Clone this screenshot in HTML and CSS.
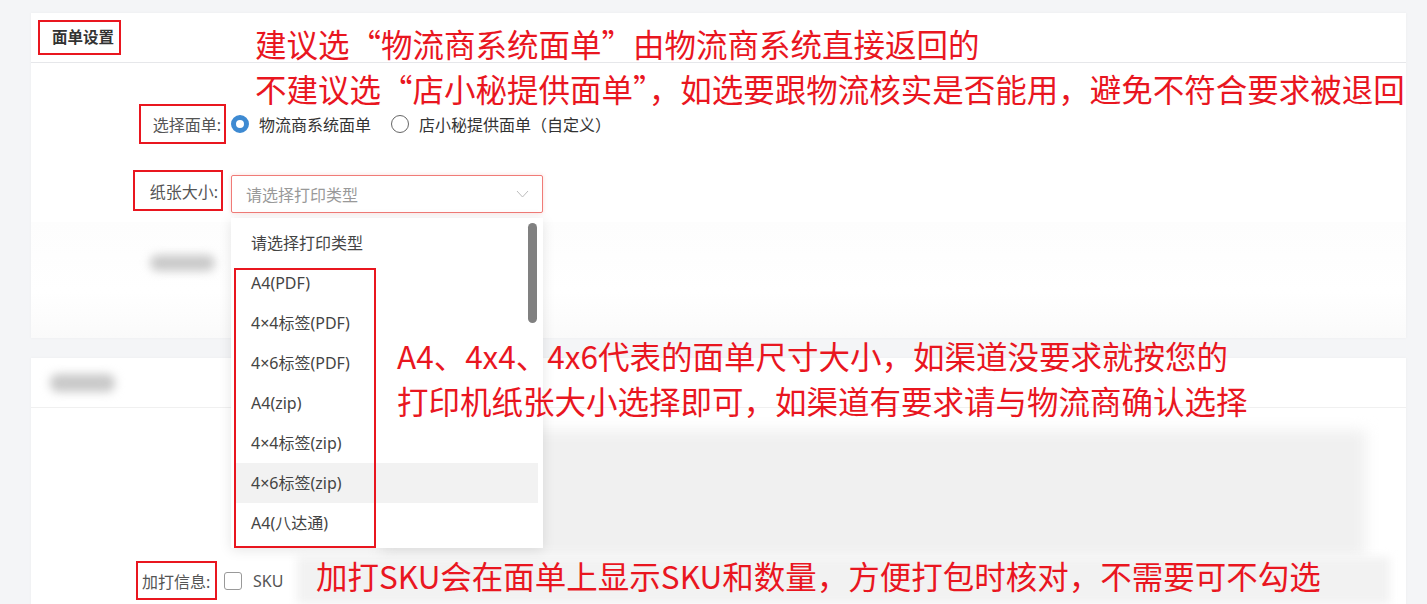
FILE: index.html
```html
<!DOCTYPE html>
<html lang="zh-CN">
<head>
  <meta charset="UTF-8" />
  <meta name="viewport" content="width=device-width, initial-scale=1.0"/>
  <title>面单设置</title>
  <link rel="stylesheet" href="styles.css">
</head>
<body>
  <div class="page">
    <section class="card card-top">
      <div class="card-head">
        <h2 class="mark title">面单设置</h2>
      </div>

      <div class="form">
        <div class="row">
          <div class="label-col"><span class="mark label">选择面单:</span></div>
          <label class="radio checked"><span class="dot"></span>物流商系统面单</label>
          <label class="radio"><span class="dot"></span>店小秘提供面单（自定义）</label>
        </div>

        <div class="row">
          <div class="label-col"><span class="mark label label-paper">纸张大小:</span></div>
          <div class="select">
            <div class="select-box">
              <span class="placeholder">请选择打印类型</span>
              <svg class="chevron" width="13" height="8" viewBox="0 0 13 8">
                <polyline points="1,1 6.5,7 12,1" fill="none" stroke="#bdbdbd" stroke-width="1"/>
              </svg>
            </div>
            <ul class="dropdown">
              <li>请选择打印类型</li>
              <li>A4(PDF)</li>
              <li>4×4标签(PDF)</li>
              <li>4×6标签(PDF)</li>
              <li>A4(zip)</li>
              <li>4×4标签(zip)</li>
              <li class="hover">4×6标签(zip)</li>
              <li>A4(八达通)</li>
            </ul>
            <span class="scroll-thumb"></span>
            <span class="items-mark"></span>
          </div>
        </div>
      </div>

      <div class="ghost-area">
        <span class="ghost ghost-label"></span>
      </div>
    </section>

    <section class="card card-bottom">
      <div class="card-head">
        <span class="ghost ghost-title"></span>
      </div>
      <div class="ghost-table"></div>
      <div class="row-check">
        <div class="check-area">
          <span class="mark label label-extra">加打信息:</span>
          <label class="checkbox"><span class="box"></span>SKU</label>
        </div>
        <div class="ghost-fill"></div>
      </div>
    </section>

    <div class="note note-top">
      <p>建议选“物流商系统面单”由物流商系统直接返回的</p>
      <p>不建议选“店小秘提供面单”，如选要跟物流核实是否能用，避免不符合要求被退回</p>
    </div>
    <div class="note note-mid">
      <p>A4、4x4、4x6代表的面单尺寸大小，如渠道没要求就按您的</p>
      <p>打印机纸张大小选择即可，如渠道有要求请与物流商确认选择</p>
    </div>
    <div class="note note-bottom">
      <p>加打SKU会在面单上显示SKU和数量，方便打包时核对，不需要可不勾选</p>
    </div>
  </div>
</body>
</html>
```

FILE: styles.css
```css
:root {
  --red: #e9161f;
  --bg: #f4f5f7;
  --card-bg: #ffffff;
  --line: #e6e7ea;
  --text: #444;
  --muted: #999;
  --blue: #3e8ad2;
}

* {
  box-sizing: border-box;
}

body {
  margin: 0;
  background: var(--bg);
  font-family: "Noto Sans", "Noto Sans CJK SC", sans-serif;
  color: var(--text);
  font-size: 16px;
  overflow: hidden;
}

.page {
  position: relative;
  height: 604px;
  padding: 13px 21px 0 31px;
}

.card {
  background: var(--card-bg);
  box-shadow: 0 0 3px rgba(0, 0, 0, 0.04);
}

.card-top {
  height: 325px;
  display: flex;
  flex-direction: column;
}

.card-head {
  height: 50px;
  border-bottom: 1px solid var(--line);
  display: flex;
  align-items: flex-start;
}

/* red annotation boxes */
.mark {
  border: 2px solid var(--red);
}

.title {
  margin: 7px 0 0 7px;
  width: 83px;
  height: 35px;
  padding-left: 12px;
  font-size: 15.5px;
  font-weight: 700;
  line-height: 31px;
  color: #333;
}

.form {
  padding-top: 42px;
  display: flex;
  flex-direction: column;
  gap: 32px;
}

.row {
  display: flex;
  align-items: center;
  height: 38px;
}

.label-col {
  width: 200px;
  display: flex;
  justify-content: flex-end;
  padding-right: 5px;
}

.label {
  height: 40px;
  padding: 0 3px 0 12px;
  display: flex;
  align-items: center;
  color: #555;
  white-space: nowrap;
}

.label-paper {
  height: 41px;
  margin-right: 3px;
  margin-top: -7px;
  padding-left: 15px;
}

.radio {
  display: flex;
  align-items: center;
  color: #333;
  margin-right: 20px;
}

.radio .dot {
  width: 18px;
  height: 18px;
  border-radius: 50%;
  border: 1px solid #666;
  margin-right: 10px;
}

.radio.checked .dot {
  border: 5px solid var(--blue);
  background: #fff;
}

.select {
  position: relative;
  width: 312px;
}

.select-box {
  height: 38px;
  border: 1px solid #f07b77;
  border-radius: 2px;
  box-shadow: 0 0 4px rgba(240, 110, 100, 0.25);
  display: flex;
  align-items: center;
  justify-content: space-between;
  padding: 0 13px 0 14px;
  background: #fff;
}

.placeholder {
  color: var(--muted);
}

.dropdown {
  position: absolute;
  top: 43px;
  left: 0;
  width: 312px;
  margin: 0;
  padding: 5px 0;
  list-style: none;
  background: #fff;
  box-shadow: 0 2px 12px rgba(0, 0, 0, 0.1);
  z-index: 5;
}

.dropdown li {
  height: 40px;
  line-height: 40px;
  margin: 0 5px;
  padding-left: 15px;
  color: #444;
}

.dropdown li.hover {
  background: #f2f2f2;
}

.scroll-thumb {
  position: absolute;
  top: 48px;
  right: 6px;
  width: 9px;
  height: 100px;
  border-radius: 5px;
  background: #808080;
  z-index: 6;
}

.items-mark {
  position: absolute;
  top: 93px;
  left: 3px;
  width: 142px;
  height: 280px;
  border: 2px solid var(--red);
  z-index: 6;
}

/* blurred background content */
.ghost-area {
  flex: 1;
  margin-top: 9px;
  background: linear-gradient(#fdfdfd, #fff 60%, #fafafa);
  padding: 33px 0 0 119px;
}

.ghost {
  display: block;
  background: #c9c9c9;
  border-radius: 8px;
  filter: blur(5px);
}

.ghost-label {
  width: 65px;
  height: 16px;
}

.card-bottom {
  margin-top: 20px;
  height: 260px;
  display: flex;
  flex-direction: column;
}

.card-bottom .card-head {
  border-bottom-color: #f0f0f0;
}

.ghost-title {
  margin: 16px 0 0 19px;
  width: 65px;
  height: 18px;
}

.ghost-table {
  margin: 22px 0 0 350px;
  width: 985px;
  height: 127px;
  background: #f0f0f0;
  filter: blur(7px);
}

.row-check {
  display: flex;
  height: 47px;
}

.check-area {
  margin-left: 104px;
  width: 162px;
  display: flex;
  align-items: center;
  background: #fff;
}

.label-extra {
  height: 39px;
  width: 81px;
  padding: 0 0 0 4px;
  margin-left: 1px;
}

.checkbox {
  display: flex;
  align-items: center;
  margin-left: 7px;
  color: #555;
}

.checkbox .box {
  width: 18px;
  height: 18px;
  border: 1px solid #999;
  border-radius: 3px;
  margin-right: 11px;
}

.ghost-fill {
  width: 1093px;
  background: #f2f2f2;
  filter: blur(4px);
}

/* annotation text */
.note {
  position: absolute;
  color: var(--red);
  font-family: "Noto Sans CJK SC", sans-serif;
  font-size: 31.5px;
  line-height: 45px;
  z-index: 10;
  white-space: nowrap;
}

.note p {
  margin: 0;
}

.note-top {
  top: 21px;
  left: 255px;
}

.note-mid {
  top: 333px;
  left: 397px;
}

.note-bottom {
  top: 553px;
  left: 316px;
}
```
